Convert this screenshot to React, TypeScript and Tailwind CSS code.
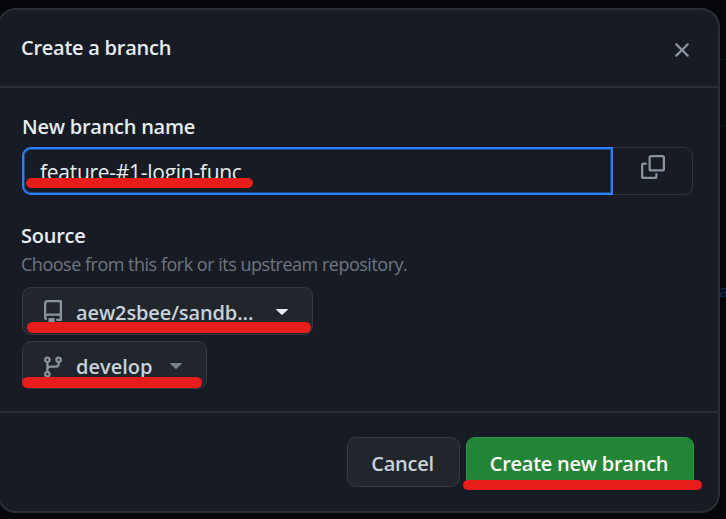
import type { ReactNode } from "react";

type IconProps = { d: string; className?: string };

function Icon({ d, className = "" }: IconProps) {
  return (
    <svg viewBox="0 0 16 16" className={`size-6 shrink-0 fill-current ${className}`} aria-hidden="true">
      <path d={d} />
    </svg>
  );
}

const icons = {
  x: "M3.72 3.72a.75.75 0 0 1 1.06 0L8 6.94l3.22-3.22a.749.749 0 0 1 1.275.326.749.749 0 0 1-.215.734L9.06 8l3.22 3.22a.749.749 0 0 1-.326 1.275.749.749 0 0 1-.734-.215L8 9.06l-3.22 3.22a.751.751 0 0 1-1.042-.018.751.751 0 0 1-.018-1.042L6.94 8 3.72 4.78a.75.75 0 0 1 0-1.06Z",
  copy: "M0 6.75C0 5.784.784 5 1.75 5h1.5a.75.75 0 0 1 0 1.5h-1.5a.25.25 0 0 0-.25.25v7.5c0 .138.112.25.25.25h7.5a.25.25 0 0 0 .25-.25v-1.5a.75.75 0 0 1 1.5 0v1.5A1.75 1.75 0 0 1 9.25 16h-7.5A1.75 1.75 0 0 1 0 14.25ZM5 1.75C5 .784 5.784 0 6.75 0h7.5C15.216 0 16 .784 16 1.75v7.5A1.75 1.75 0 0 1 14.25 11h-7.5A1.75 1.75 0 0 1 5 9.25Zm1.75-.25a.25.25 0 0 0-.25.25v7.5c0 .138.112.25.25.25h7.5a.25.25 0 0 0 .25-.25v-7.5a.25.25 0 0 0-.25-.25Z",
  repo: "M2 2.5A2.5 2.5 0 0 1 4.5 0h8.75a.75.75 0 0 1 .75.75v12.5a.75.75 0 0 1-.75.75h-2.5a.75.75 0 0 1 0-1.5h1.75v-2h-8a1 1 0 0 0-.714 1.7.75.75 0 1 1-1.072 1.05A2.495 2.495 0 0 1 2 11.5Zm10.5-1h-8a1 1 0 0 0-1 1v6.708A2.486 2.486 0 0 1 4.5 9h8ZM5 12.25a.25.25 0 0 1 .25-.25h3.5a.25.25 0 0 1 .25.25v3.25a.25.25 0 0 1-.4.2l-1.45-1.087a.249.249 0 0 0-.3 0L5.4 15.7a.25.25 0 0 1-.4-.2Z",
  branch:
    "M9.5 3.25a2.25 2.25 0 1 1 3 2.122V6A2.5 2.5 0 0 1 10 8.5H6a1 1 0 0 0-1 1v1.128a2.251 2.251 0 1 1-1.5 0V5.372a2.25 2.25 0 1 1 1.5 0v1.836A2.493 2.493 0 0 1 6 7h4a1 1 0 0 0 1-1v-.628A2.25 2.25 0 0 1 9.5 3.25Zm-6 0a.75.75 0 1 0 1.5 0 .75.75 0 0 0-1.5 0Zm8.25-.75a.75.75 0 1 0 0 1.5.75.75 0 0 0 0-1.5ZM4.25 12a.75.75 0 1 0 0 1.5.75.75 0 0 0 0-1.5Z",
};

function Caret({ className }: { className: string }) {
  return (
    <svg viewBox="0 0 12 6" className={`h-1.5 w-3 shrink-0 fill-current ${className}`} aria-hidden="true">
      <path d="M.5 0h11a.4.4 0 0 1 .3.7L6.4 5.8a.6.6 0 0 1-.8 0L.2.7A.4.4 0 0 1 .5 0Z" />
    </svg>
  );
}

function Marker({ className }: { className: string }) {
  return <div className={`absolute z-10 h-[10.5px] rounded-full bg-[#e71d1c] ${className}`} />;
}

function Select({ className, children }: { className: string; children: ReactNode }) {
  return (
    <button
      className={`relative flex h-12 items-center rounded-[9px] border border-[#353a42] bg-[#21262d] pl-[18px] text-left text-[#c9d1d9] ${className}`}
    >
      {children}
    </button>
  );
}

export default function App() {
  return (
    <div className="relative h-[519px] w-[726px] overflow-hidden bg-[#05070b] pt-2 font-['Open_Sans','Noto_Sans',sans-serif] text-[20px] leading-7 text-[#e6edf3]">
      <div className="absolute top-[59px] right-0 h-px w-2 bg-[#101318]" />
      <div className="absolute top-[125px] right-0 h-px w-2 bg-[#101318]" />
      <span className="absolute top-[277px] left-[719px] text-[17px] text-[#0d2f66]">a</span>

      <div className="relative -ml-[3px] flex h-[505px] w-[723px] flex-col rounded-[19px] border-2 border-[#292e36] bg-[#171b23]">
        <header className="flex h-[78px] shrink-0 items-center justify-between border-b-2 border-[#292e36] pr-6 pl-[23px]">
          <h1 className="-ml-px font-semibold tracking-[-0.25px]">Create a branch</h1>
          <button className="mt-1 text-[#8b949e]" aria-label="Close">
            <Icon d={icons.x} />
          </button>
        </header>

        <main className="flex flex-1 flex-col items-start pt-[25px] pl-[23px]">
          <label className="font-semibold tracking-[-0.25px]">New branch name</label>
          <div className="mt-1.5 flex h-12">
            <div className="relative flex w-[591px] items-center rounded-l-[9px] border-2 border-[#2f81f7] pt-px pl-[17px] inset-shadow-[0_0_0_1px_#1e4681]">
              <span className="-ml-px text-[21px] tracking-[-0.28px]">feature-#1-login-func</span>
              <Marker className="top-[28.5px] left-[2px] w-[227px]" />
            </div>
            <button
              className="flex w-20 justify-center rounded-r-[9px] border border-l-0 border-[#30363d] pt-[7px] text-[#8b949e]"
              aria-label="Copy"
            >
              <Icon d={icons.copy} />
            </button>
          </div>

          <h2 className="mt-[27px] -ml-px font-semibold tracking-[-0.25px]">Source</h2>
          <p className="-ml-px text-[18px] tracking-[-0.49px] text-[#6e7681]">
            Choose from this fork or its upstream repository.
          </p>

          <Select className="mt-[9px] w-[291px]">
            <Icon d={icons.repo} className="mt-0.5 text-[#8b949e]" />
            <span className="mt-1 ml-[11px] w-[200px] font-semibold tracking-[-0.12px]">aew2sbee/sandb...</span>
            <Caret className="mt-px text-[#e6edf3]" />
            <Marker className="top-[34px] left-[4px] w-[284px]" />
          </Select>
          <Select className="mt-1.5 w-[185px]">
            <Icon d={icons.branch} className="mt-[3px] text-[#8b949e]" />
            <span className="mt-1 ml-[11px] w-[94px] font-semibold tracking-[0px]">develop</span>
            <Caret className="mt-0.5 text-[#7a828c]" />
            <Marker className="top-[35px] -left-px w-[180px]" />
          </Select>
        </main>

        <footer className="flex h-[100px] shrink-0 items-center justify-end gap-1.5 border-t-2 border-[#292e36] pr-6">
          <button className="h-[50px] w-[113px] rounded-[9px] border border-[#353a42] bg-[#21262d] pt-1 pr-0.5 font-semibold tracking-[-0.25px] text-[#c9d1d9]">
            Cancel
          </button>
          <button className="relative h-[50px] w-[228px] rounded-[9px] border border-[#369546] bg-[#238636] pt-1 pr-0.5 font-semibold tracking-[-0.25px] text-white">
            Create new branch
            <Marker className="top-[41.5px] -left-1 w-[239px]" />
          </button>
        </footer>
      </div>
    </div>
  );
}
